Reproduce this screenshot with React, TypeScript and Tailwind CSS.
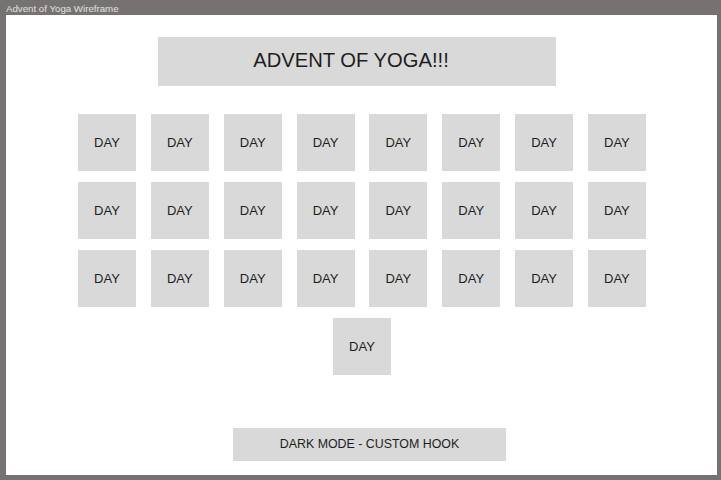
export default function App() {
  const days = Array.from({ length: 24 });
  return (
    <div
      className="w-[721px] h-[480px] bg-[#767271] flex flex-col overflow-hidden"
      style={{ fontFamily: "'Liberation Sans', Arial, sans-serif" }}
    >
      <div className="h-[15px] pl-[6px] text-[9.7px] leading-[17px] text-[#e3e1e0]">Advent of Yoga Wireframe</div>
      <div className="ml-[6px] w-[711px] h-[460px] bg-white flex flex-col items-start">
        <div className="mt-[22px] ml-[152px] w-[398px] h-[49px] bg-[#d9d9d9] flex items-center justify-center pr-[12px] pb-[2px] text-[20.2px] text-[#1e1e1e]">
          ADVENT OF YOGA!!!
        </div>
        <div className="mt-[28px] ml-[72px] grid grid-cols-8 gap-x-[14.85px] gap-y-[11px]">
          {days.map((_, i) => (
            <div key={i} className="w-[58px] h-[57px] bg-[#d9d9d9] flex items-center justify-center text-[13px] text-[#1e1e1e]">
              DAY
            </div>
          ))}
        </div>
        <div className="mt-[11px] ml-[327px] w-[58px] h-[57px] bg-[#d9d9d9] flex items-center justify-center text-[13px] text-[#1e1e1e]">
          DAY
        </div>
        <div className="mt-[53px] ml-[227px] w-[273px] h-[33px] bg-[#d9d9d9] flex items-center justify-center text-[12.4px] text-[#1e1e1e]">
          DARK MODE - CUSTOM HOOK
        </div>
      </div>
    </div>
  );
}
